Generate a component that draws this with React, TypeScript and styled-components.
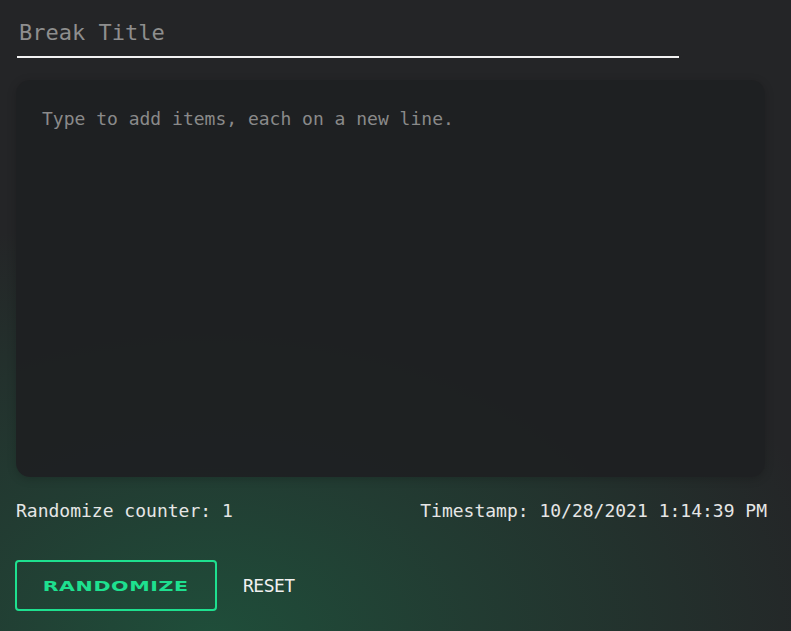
import React, { useState } from "react";
import styled, { createGlobalStyle } from "styled-components";

const GlobalStyle = createGlobalStyle`
  html, body, #root { margin: 0; padding: 0; min-height: 100vh; }
  body {
    background-color: #242527;
    background-image:
      radial-gradient(ellipse 640px 430px at 210px 640px, rgba(31, 78, 58, 1) 0%, rgba(33, 70, 55, 0.7) 40%, rgba(36, 37, 39, 0) 100%);
    font-family: "DejaVu Sans Mono", "Liberation Mono", monospace;
    color: #e8e8e8;
    overflow: hidden;
  }
  * { box-sizing: border-box; }
`;

const Page = styled.div`
  display: flex;
  flex-direction: column;
  padding: 9px 26px 0 16px;
  width: 791px;
`;

const TitleInput = styled.input`
  width: 662px;
  margin-left: 1px;
  height: 49px;
  padding: 0 2px;
  background: transparent;
  border: none;
  border-bottom: 2px solid #f2f2f2;
  color: #e8e8e8;
  font-family: "DejaVu Sans Mono", monospace;
  font-size: 22px;
  outline: none;
  &::placeholder { color: #8e8e8e; }
`;

const ItemsArea = styled.textarea`
  margin-top: 22px;
  width: 749px;
  height: 397px;
  resize: none;
  border: none;
  border-radius: 14px;
  background: rgba(30, 32, 34, 0.92);
  box-shadow: 0 2px 10px rgba(0, 0, 0, 0.18);
  padding: 28px 26px;
  color: #e8e8e8;
  font-family: "DejaVu Sans Mono", monospace;
  font-size: 18px;
  line-height: 1.2;
  outline: none;
  &::placeholder { color: #8a8a8a; }
`;

const InfoRow = styled.div`
  display: flex;
  justify-content: space-between;
  width: 751px;
  margin-top: 22px;
  font-size: 18px;
  line-height: 24px;
  color: #e6e6e6;
`;

const Actions = styled.div`
  display: flex;
  align-items: center;
  gap: 26px;
  margin-top: 37px;
  margin-left: -1px;
`;

const PrimaryButton = styled.button`
  width: 202px;
  height: 51px;
  border: 2px solid #1ee08f;
  border-radius: 4px;
  background: transparent;
  color: #1ee08f;
  cursor: pointer;
  display: flex;
  align-items: center;
  justify-content: center;
`;

const Wide = styled.span`
  display: inline-block;
  font-family: "DejaVu Sans", sans-serif;
  font-weight: 900;
  font-size: 14px;
  letter-spacing: 0.4px;
  transform: scaleX(1.47);
`;

const TextButton = styled.button`
  background: transparent;
  border: none;
  padding: 0;
  color: #f0f0f0;
  font-family: "DejaVu Sans Mono", monospace;
  font-size: 18px;
  letter-spacing: -0.5px;
  cursor: pointer;
`;

export default function App() {
  const [counter, setCounter] = useState(1);
  return (
    <>
      <GlobalStyle />
      <Page>
        <TitleInput placeholder="Break Title" />
        <ItemsArea placeholder="Type to add items, each on a new line." />
        <InfoRow>
          <span>Randomize counter: {counter}</span>
          <span>Timestamp: 10/28/2021 1:14:39 PM</span>
        </InfoRow>
        <Actions>
          <PrimaryButton onClick={() => setCounter(counter + 1)}>
            <Wide>RANDOMIZE</Wide>
          </PrimaryButton>
          <TextButton onClick={() => setCounter(0)}>RESET</TextButton>
        </Actions>
      </Page>
    </>
  );
}
